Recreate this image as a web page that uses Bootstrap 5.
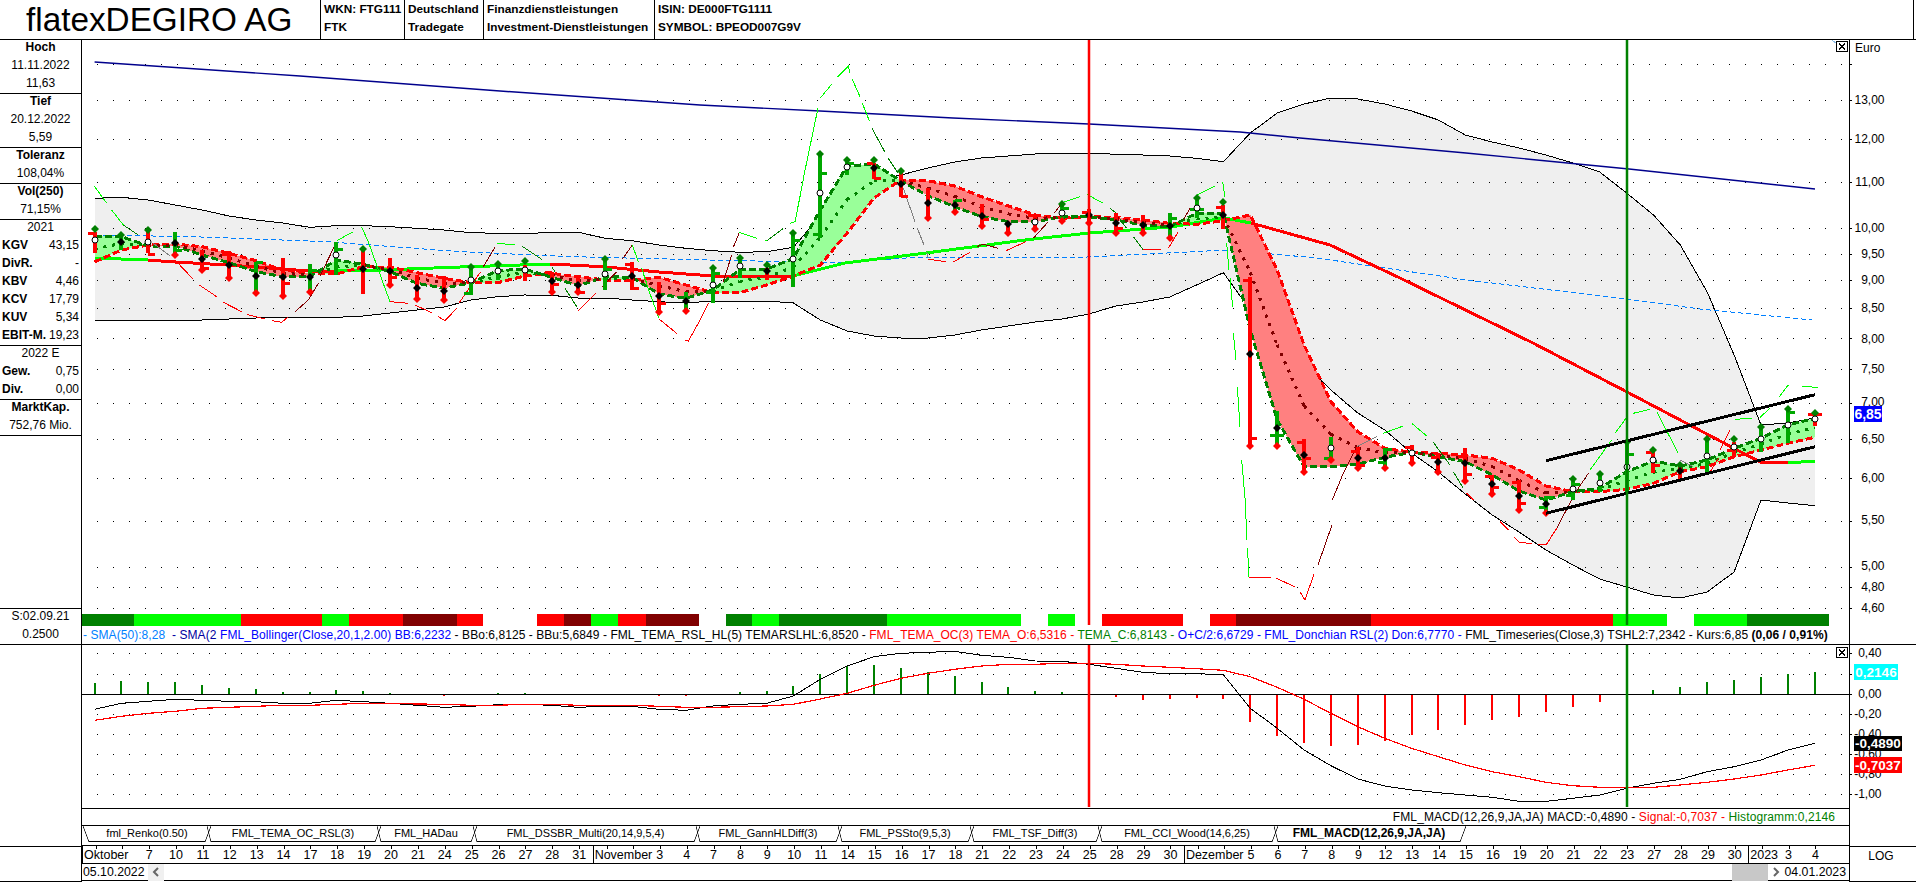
<!DOCTYPE html>
<html lang="de">
<head>
<meta charset="utf-8">
<title>flatexDEGIRO AG</title>
<link rel="stylesheet" href="https://cdn.jsdelivr.net/npm/bootstrap@5.3.0/dist/css/bootstrap.min.css">
<style>
html,body{margin:0;height:882px;overflow:hidden;background:#fff;color:#000;font-family:"Liberation Sans",Arial,sans-serif;font-size:12px;line-height:18px}
.line-b{border-bottom:1px solid #000}
.line-t{border-top:1px solid #000}
.line-s{border-left:1px solid #000}
.line-e{border-right:1px solid #000}
.head-bar{height:40px}
.head-title{width:320px;font-size:33.3px;line-height:40px;padding-left:26px;white-space:nowrap}
.head-cell{padding-left:3px;font-size:11.8px;font-weight:700;white-space:nowrap;overflow:hidden}
.hw-1{width:84px}.hw-2{width:79px}.hw-3{width:171px}.hw-4{width:148px}
.head-end{width:3px}
.side-col{width:82px;flex:none;height:842px}
.sc-1,.sc-3,.sc-7{display:flow-root}
.sc-1{height:36px}.sc-3{height:54px}.sc-7{height:126px}.sc-gap{height:173px}.sc-low{height:202px}.sc-foot{height:35px}
.sc-1>div:first-child,.sc-3>div:first-child,.sc-7>div:first-child{margin-top:-2px}
.kv{padding:0 2px}
.kv b{font-weight:700}
.mid-col{width:1767px;flex:none}
.axis-col{width:67px;flex:none}
svg{display:block}
.chart-main{width:1767px;height:586px}
.chart-low{width:1767px;height:163px}
.ax-main{width:66px;height:604px}
.ax-low{width:66px;height:201px}
.ax-sec-1{height:605px}.ax-sec-2{height:202px}.ax-sec-3{height:35px}
.legend-row{height:19px;padding-left:1px;white-space:nowrap;overflow:hidden;font-size:12px;letter-spacing:.06px}
.sma-cut{display:inline-block;width:42px;margin-right:6px;vertical-align:top}
.c-sky{color:#0080ff}.c-navy{color:#0000a0}.c-blue{color:#0000ff}.c-red{color:#f00}.c-grn{color:#008000}
.macd-row{height:17px;line-height:17px;padding-right:14px;white-space:nowrap;letter-spacing:.1px}
.tab-row{height:20px;display:grid;grid-template-columns:116px 164px 90px 217px 136px 126px 122px 170px 182px;column-gap:6px;padding-left:7px;white-space:nowrap}
.tab-item{position:relative;height:16px;line-height:15px;border-bottom:1px solid #000;text-align:center;font-size:11px}
.tab-item::before,.tab-item::after{content:"";position:absolute;top:0;bottom:-1px}
.tab-item::before{left:-4px;width:4px;background:linear-gradient(to bottom left,transparent calc(50% - .7px),#000 50%,transparent calc(50% + .7px))}
.tab-item::after{right:-6px;width:6px;background:linear-gradient(to bottom right,transparent calc(50% - .7px),#000 50%,transparent calc(50% + .7px))}
.tab-item:first-child::before{left:-6px;width:6px}
.tab-active{font-weight:700;font-size:12px}
.date-row{height:18px;display:grid;grid-template-columns:repeat(65,26.877px);white-space:nowrap;font-size:12.5px}
.date-cell{position:relative;text-align:center;line-height:18px}
.date-cell::before{content:"";position:absolute;left:50%;top:0;height:3px;width:1px;background:#000}
.date-cell.month{text-align:left;padding-left:1px;border-left:1px solid #000}
.date-cell.month::before{left:13px}
.scroll-row{height:18px;font-size:12.3px;padding-left:1px;white-space:nowrap}
.scroll-btn{width:16px;height:17px;background:#f0f0f0}
.scroll-btn.plain{background:transparent}
.scroll-thumb{width:36px;height:17px;background:#c8c8c8}
.log-cell{text-align:center;font-size:12px;line-height:18px;padding-right:4px}
</style>
</head>
<body>
<header class="head-bar d-flex line-b">
  <div class="head-title">flatexDEGIRO AG</div>
  <div class="head-cell line-s hw-1"><div>WKN: FTG111</div><div>FTK</div></div>
  <div class="head-cell line-s hw-2"><div>Deutschland</div><div>Tradegate</div></div>
  <div class="head-cell line-s hw-3"><div>Finanzdienstleistungen</div><div>Investment-Dienstleistungen</div></div>
  <div class="head-cell line-s hw-4"><div>ISIN: DE000FTG1111</div><div>SYMBOL: BPEOD007G9V</div></div>
  <div class="line-s ms-auto head-end"></div>
</header>
<main class="d-flex">
  <aside class="side-col line-e text-center">
    <div class="sc-3 line-b"><div class="fw-bold">Hoch</div><div>11.11.2022</div><div>11,63</div></div>
    <div class="sc-3 line-b"><div class="fw-bold">Tief</div><div>20.12.2022</div><div>5,59</div></div>
    <div class="sc-1 line-b"><div class="fw-bold">Toleranz</div><div>108,04%</div></div>
    <div class="sc-1 line-b"><div class="fw-bold">Vol(250)</div><div>71,15%</div></div>
    <div class="sc-7 line-b">
      <div>2021</div>
      <div class="d-flex justify-content-between kv"><b>KGV</b><span>43,15</span></div>
      <div class="d-flex justify-content-between kv"><b>DivR.</b><span>-</span></div>
      <div class="d-flex justify-content-between kv"><b>KBV</b><span>4,46</span></div>
      <div class="d-flex justify-content-between kv"><b>KCV</b><span>17,79</span></div>
      <div class="d-flex justify-content-between kv"><b>KUV</b><span>5,34</span></div>
      <div class="d-flex justify-content-between kv"><b>EBIT-M.</b><span>19,23</span></div>
    </div>
    <div class="sc-3 line-b">
      <div>2022 E</div>
      <div class="d-flex justify-content-between kv"><b>Gew.</b><span>0,75</span></div>
      <div class="d-flex justify-content-between kv"><b>Div.</b><span>0,00</span></div>
    </div>
    <div class="sc-1 line-b"><div class="fw-bold">MarktKap.</div><div>752,76 Mio.</div></div>
    <div class="sc-gap line-b"></div>
    <div class="sc-1 line-b"><div>S:02.09.21</div><div>0.2500</div></div>
    <div class="sc-low line-b"></div>
    <div class="sc-foot line-b"></div>
  </aside>
  <section class="mid-col d-flex flex-column">
    <svg class="chart-main" id="mainChart" viewBox="82 40 1767 586" xmlns="http://www.w3.org/2000/svg" shape-rendering="crispEdges"></svg>
    <div class="legend-row line-b"><span class="c-sky">- SMA(50):8,28</span>&nbsp; <span class="c-navy sma-cut">- SMA(2</span><span class="c-blue">FML_Bollinger(Close,20,1,2.00) BB:6,2232</span> - BBo:6,8125 - BBu:5,6849 - FML_TEMA_RSL_HL(5) TEMARSLHL:6,8520 - <span class="c-red">FML_TEMA_OC(3) TEMA_O:6,5316 -</span> <span class="c-grn">TEMA_C:6,8143 -</span> <span class="c-blue">O+C/2:6,6729 - FML_Donchian RSL(2) Don:6,7770 -</span> FML_Timeseries(Close,3) TSHL2:7,2342 - Kurs:6,85 <b>(0,06 / 0,91%)</b></div>
    <svg class="chart-low" id="lowChart" viewBox="82 645 1767 163" xmlns="http://www.w3.org/2000/svg" shape-rendering="crispEdges"></svg>
    <div class="line-t macd-row text-end">FML_MACD(12,26,9,JA,JA) MACD:-0,4890 - <span class="c-red">Signal:-0,7037 -</span> <span class="c-grn">Histogramm:0,2146</span></div>
    <nav class="tab-row line-t">
      <div class="tab-item">fml_Renko(0.50)</div>
      <div class="tab-item">FML_TEMA_OC_RSL(3)</div>
      <div class="tab-item">FML_HADau</div>
      <div class="tab-item">FML_DSSBR_Multi(20,14,9,5,4)</div>
      <div class="tab-item">FML_GannHLDiff(3)</div>
      <div class="tab-item">FML_PSSto(9,5,3)</div>
      <div class="tab-item">FML_TSF_Diff(3)</div>
      <div class="tab-item">FML_CCI_Wood(14,6,25)</div>
      <div class="tab-item tab-active">FML_MACD(12,26,9,JA,JA)</div>
    </nav>
    <div class="date-row line-t" id="dateRow"></div>
    <div class="scroll-row line-t line-b d-flex align-items-center">
      <span>05.10.2022</span>
      <div class="scroll-btn ms-1 d-flex align-items-center justify-content-center"><svg width="8" height="10" viewBox="0 0 8 10"><path d="M6 1 2 5l4 4" fill="none" stroke="#666" stroke-width="2"/></svg></div>
      <div class="flex-grow-1"></div>
      <div class="scroll-thumb"></div>
      <div class="scroll-btn plain d-flex align-items-center justify-content-center"><svg width="8" height="10" viewBox="0 0 8 10"><path d="m2 1 4 4-4 4" fill="none" stroke="#666" stroke-width="2"/></svg></div>
      <span class="pe-1">04.01.2023</span>
    </div>
  </section>
  <aside class="axis-col line-s d-flex flex-column">
    <div class="ax-sec-1 line-b"><svg class="ax-main" id="axMain" viewBox="1850 40 66 604" xmlns="http://www.w3.org/2000/svg"></svg></div>
    <div class="ax-sec-2 line-b"><svg class="ax-low" id="axLow" viewBox="1850 645 66 201" xmlns="http://www.w3.org/2000/svg"></svg></div>
    <div class="ax-sec-3 line-b log-cell">LOG</div>
  </aside>
</main>
<script src="https://cdn.jsdelivr.net/npm/bootstrap@5.3.0/dist/js/bootstrap.bundle.min.js"></script>
<script>
const X=i=>94.6+26.877*i;
const O=[262,250,245,244,246.7,253.3,260.7,270,273.3,274,266.7,267.3,272.7,278.3,282.7,282.7,276,273.3,276.7,280,280,277.3,285,292.7,292.7,285,276,265,233,198,180,180.7,186,196.7,206,215,218.3,216.7,217.3,220,223.3,224.3,220.7,215,270,345,401.7,431.7,448.3,452.3,453.3,455,458.3,470,486,491.7,491.7,489.3,483.3,471.7,466.7,456.7,450,443.3,437.3];
const C=[236,236.7,246,246,255,262.7,271.7,276.7,276.7,260,264.3,271.7,283.3,288.3,282.7,270.7,269,277.3,285.7,276.7,277.3,294,298.3,290,270,269.3,258.3,210,166,164,181,195.7,206.7,216.7,221.7,221.7,216.7,216.7,220,225,226.7,213.3,213.3,330,420,466.7,466.7,464,457.3,452.3,456.7,461.7,475,491,500,491.7,488.3,471.7,461,466,460,448.3,438.3,425,418.3];
const BO=[198.3,197.3,200,205,210,216,220,223,227.3,225.7,225.7,226.7,228.3,230,232.7,233.3,233.3,232.7,232.3,238.3,240.7,245,248.3,250.7,252.3,251.7,247.3,216,193,180.7,175,168,162,158,156,154,153,153,154.3,155,156,158.3,161.7,133,113,104,98,99,104,111,120,135,142,148,155,163,172,193,215,245,292,355,425,423,418];
const BU=[320.7,320.7,320.7,320.7,320,319,318,317.7,317.3,317.3,316,313,310,307,300,296.7,295,295.3,298,298,300,301.7,303,301,301,301,303,320,331,336,338,338,335,330,326,322,319,314,306,302,297,285,272.7,310,340,364,390,413,430,453,472,494,515,532,550,565,579,587,595,598,592,572,500,503,505.7];
const BARS=[['r',232,253,240,'w',229,0,233,0],['g',235,250,242,'b',235,0,0,0],['r',232,253,242,'w',230,0,0,254],['g',232,255,243,'b',0,255,0,250],['r',250,270,259,'b',0,270,0,268],['r',251,278,265,'b',0,278,254,0],['g',262,293,276,'b',0,293,0,262],['r',258,296,277,'b',0,296,0,283],['g',264,292,277,'b',0,292,0,270],['g',242,275,255,'w',0,0,0,249],['r',250,294,269,'b',249,0,0,0],['r',258,285,271,'b',0,285,0,277],['r',275,300,288,'b',0,299,0,0],['r',276,300,291,'b',0,300,0,0],['g',267,295,280,'w',267,0,293,0],['g',264,280,271,'w',264,0,0,0],['r',265,281,270,'w',261,0,0,0],['r',272,293,281,'b',0,292,272,284],['r',277,293,285,'b',0,292,0,292],['g',260,290,274,'w',259,0,0,269],['r',262,290,276,'b',0,0,264,288],['r',282,313,296,'b',0,312,0,303],['g',292,311,301,'b',0,311,0,0],['g',268,303,285,'w',268,0,292,273],['g',258,278,266,'w',258,0,0,0],['r',268,280,271,'b',265,0,0,276],['g',233,287,259,'w',233,0,0,240],['g',154,238,193,'w',154,0,234,173],['g',160,175,167,'w',160,0,0,163],['r',163,179,168,'b',160,0,163,178],['r',171,197,184,'b',171,0,0,196],['r',188,220,203,'b',0,218,0,0],['g',200,212,205,'b',0,212,0,200],['r',204,228,216,'b',0,226,0,219],['r',222,232,224,'b',0,233,0,0],['r',215,229,222,'w',0,229,215,0],['g',204,221,213,'w',204,221,0,208],['r',209,222,215,'b',0,223,212,0],['r',213,233,223,'b',0,233,0,228],['r',215,233,225,'b',0,233,0,0],['g',213,238,226,'b',0,238,0,218],['g',198,218,208,'w',198,0,209,209],['r',205,229,215,'b',202,0,207,0],['r',277,446,354,'b',0,446,280,438],['g',411,446,428,'b',0,446,435,435],['r',439,472,455,'b',0,472,442,458],['g',437,460,448,'w',0,460,458,0],['r',447,468,458,'b',0,468,451,465],['g',448,468,458,'b',0,468,462,449],['r',445,463,453,'w',0,463,447,0],['r',453,473,462,'b',0,472,457,0],['r',448,481,463,'b',0,481,456,474],['r',475,494,484,'b',0,494,476,487],['r',480,510,496,'b',0,510,482,503],['g',496,513,504,'b',0,513,507,497],['g',479,500,489,'w',479,0,495,484],['g',474,492,483,'w',474,0,0,0],['g',442,492,467,'w',442,0,0,454],['r',452,473,460,'w',450,0,452,465],['r',467,480,471,'b',465,0,0,0],['g',439,475,456,'w',439,0,0,0],['r',442,457,447,'w',439,0,450,0],['g',427,452,439,'w',427,0,0,0],['g',409,443,425,'w',409,0,0,412],['r',415,426,419,'w',413,0,414,414]];
const STRIP=[[82,134,'#008000'],[134,241,'#0f0'],[241,322,'#f00'],[322,349,'#0f0'],[349,403,'#f00'],[403,457,'#800000'],[457,483,'#f00'],[537,564,'#f00'],[564,591,'#800000'],[591,618,'#0f0'],[618,645.5,'#f00'],[645.5,699,'#800000'],[726,752,'#008000'],[752,779,'#0f0'],[779,887,'#008000'],[887,1021,'#0f0'],[1048,1075,'#0f0'],[1102,1183,'#f00'],[1210,1236,'#f00'],[1236,1371,'#800000'],[1371,1613,'#f00'],[1613,1667,'#0f0'],[1694,1747,'#0f0'],[1747,1829,'#008000']];
const G='#0f0',D='#008000',R='#f00',K='#800000',Y='#808080';
function thin(ox,oy,list){return list.map(([c,a])=>[c,a.map((v,i)=>i%2?oy+v/3:ox+v/3)]);}
const THIN=[].concat(
 thin(60,170,[[G,[103,48,140,100]],[G,[155,120,190,165]],[D,[190,165,235,195]],[Y,[280,220,330,258]],[R,[345,270,400,328]],[R,[418,345,470,380]],[R,[490,397,545,425]],[R,[560,433,615,447]],[R,[635,452,665,457,685,440]],[K,[705,425,745,390,775,340]],[K,[780,318,830,215]],[G,[830,212,880,185]],[G,[905,172,925,215,975,355,990,395]],[R,[990,395,1045,400]],[R,[1065,405,1115,428]],[R,[1135,440,1155,452,1190,415]]]),
 thin(440,170,[[R,[58,398,122,305]],[K,[130,290,165,232]],[G,[172,220,225,225]],[D,[245,228,305,268]],[D,[335,290,345,305]],[D,[375,355,410,410]],[R,[415,422,467,370]],[K,[487,350,530,305]],[K,[547,268,577,225]],[G,[577,225,595,275]],[G,[605,295,628,365,657,445]],[R,[657,447,710,490]],[R,[735,510,745,513,775,460,805,400]],[K,[850,335,875,255]],[K,[880,232,897,190]],[G,[897,187,950,205]],[G,[975,212,980,213]],[D,[980,213,1030,175]],[G,[1050,160,1065,155,1090,30]]]),
 [[G,[803,180,818,108]]],
 thin(820,50,[[G,[0,145,35,103]],[G,[52,82,85,48,90,68]],[G,[97,88,120,140]],[G,[127,160,148,212]],[D,[155,233,195,307]],[D,[205,325,235,370]],[Y,[250,415,285,515]],[Y,[292,535,312,585]],[Y,[320,605,325,625]],[R,[325,628,378,635]],[R,[398,637,450,607]],[K,[470,590,490,583,535,595]],[R,[558,602,617,575]],[K,[640,565,685,515]],[K,[703,490,725,460]],[G,[725,458,780,440]],[G,[800,433,850,460]],[D,[870,475,890,490]],[D,[905,515,920,535]],[D,[940,560,970,600]],[R,[970,600,1023,597]],[R,[1045,595,1075,545]],[K,[1090,510,1110,475]],[G,[1130,435,1185,408]],[G,[1208,397,1215,440]]]),
 thin(1200,200,[[G,[80,130,87,210]],[G,[90,235,98,320]],[G,[100,400,108,480]],[G,[112,560,120,680]],[G,[125,780,135,895]],[K,[397,900,430,820,470,740]],[Y,[470,740,530,710]],[G,[550,700,610,678]],[G,[635,670,680,708]],[D,[700,727,750,795]],[D,[760,815,790,865]],[R,[800,880,820,900]]]),
 [[G,[1245,498,1247,540]],[G,[1247.5,548,1249,577]],[R,[1249,577,1271,577]],[R,[1276,578,1295,587]],[R,[1300,592,1305,600,1314,574]],[K,[1318,565,1332,525]]],
 thin(1500,360,[[R,[0,485,25,510]],[R,[43,532,60,548,95,550]],[R,[115,552,140,552,170,505]],[K,[170,505,225,400]],[K,[225,400,265,340]],[G,[270,330,335,240]],[G,[345,220,378,175]],[G,[400,160,450,148]],[G,[470,155,535,280]],[Y,[540,300,580,320]],[R,[625,345,655,295]],[R,[660,270,690,210]],[G,[705,178,755,175]],[G,[780,172,810,145]],[G,[838,110,865,75]],[G,[905,78,955,83]]])
);
const HIST=[683.3,681,682.3,682.3,685.3,688.3,689.3,692,692,690.3,691,693,694,696,694,693,693,694,694,694,694,696,696,694,692,691,686,674.3,666,665,668.3,672.3,676,682,687,691,692,694,696.7,699.7,698.7,697.7,698.7,721.7,735.7,743.3,745.7,744.7,740.7,734.7,729.7,724.7,719.7,716.7,711.7,706.7,701.7,694,690.3,687,682.3,680,677.3,674.3,672.3];
const MACD=[709.3,703.3,701.3,699.3,700.3,701.3,701.7,703.3,703.3,700.3,701.7,703.3,705.3,707.3,706.3,704.7,704.3,705.3,707.3,706.3,706.3,709.3,710.3,706,704.3,703.3,696,679.3,666,656.7,653.3,652.3,651.3,655.3,657.3,661,661.3,664.3,668.3,672.3,673.7,673.7,674.7,708.3,728.3,750,765.7,779,786,790,792.7,795,797.3,801.3,801.3,798.3,795,788.3,783.3,779.3,771.7,766.7,760,750,743.3];
const SIG=[720.3,716.3,713.3,711.3,708.3,707.3,706.3,705.3,705.3,704.3,703.3,703.3,704,704.3,705.3,705.3,704.3,704.3,705.3,705.3,705.3,706.3,707.3,707.3,706.7,706,704.3,699,693.3,685.3,678.3,673.3,669.3,666,664.3,664.3,663.3,663.3,664.3,666,667.3,668.7,670.3,676.7,687.3,699.3,713.3,726.7,738.3,748.3,756.7,765,771.7,776.7,782.3,785.7,787.3,787.3,787.3,785,782.3,779,775,770,765.3];

function pl(pts,c,w,extra){return `<polyline points="${pts.join(' ')}" fill="none" stroke="${c}" stroke-width="${w}" ${extra||''}/>`;}
const series=a=>a.map((y,i)=>[+X(i).toFixed(1),y]);
function dots(rows,xEnd){let s='';rows.forEach(y=>{for(let x=97;x<xEnd;x+=16)s+=`<rect x="${x}" y="${y}" width="1" height="1" fill="#000"/>`;});return s;}
function closeBox(x,y){return `<rect x="${x+.5}" y="${y+.5}" width="11" height="10" fill="#fff" stroke="#000"/><path d="M${x+3} ${y+3}l6 5M${x+9} ${y+3}l-6 5" stroke="#000" stroke-width="1.5" fill="none"/>`;}
function diamond(x,y,r,c){return `<polygon points="${x},${y-r} ${x+r},${y} ${x},${y+r} ${x-r},${y}" fill="${c}" shape-rendering="auto"/>`;}

function drawMain(){
 let s='';
 s+=`<polygon points="${series(BO).concat(series(BU).reverse()).join(' ')}" fill="#efefef"/>`;
 s+=dots([64,100,139,182,228,254,280,308,338,369,403,439,478,521,567,587,608],1845);
 s+=pl(series(BO),'#000',1)+pl(series(BU),'#000',1);
 s+=pl([[94.6,62],[300,76],[500,91],[700,105],[820,111],[953,118],[1089,124],[1240,132],[1300,138],[1466,153],[1629,169],[1815,189]],'#00008c',1.4,'shape-rendering="auto"');
 s+=pl([[94.6,235],[193,236.7],[327,241.7],[460,251.7],[573,256.7],[707,260],[840,262.7],[920,257],[1087,257],[1227,250],[1317,258],[1467,280],[1627,299],[1700,309],[1812,320]],'#0080ff',1,'stroke-dasharray="5 3"');
 const gf='#99ff99',rf='#ff8080';
 let mid='';
 for(let i=0;i<64;i++){
  const x0=X(i),x1=X(i+1),d0=O[i]-C[i],d1=O[i+1]-C[i+1];
  const poly=(a,c)=>`<polygon points="${a.join(' ')}" fill="${c}"/>`;
  if(d0*d1>=0){
   s+=poly([[x0,O[i]],[x1,O[i+1]],[x1,C[i+1]],[x0,C[i]]],(d0+d1)>=0?gf:rf);
  }else{
   const t=d0/(d0-d1),xm=x0+(x1-x0)*t,ym=O[i]+(O[i+1]-O[i])*t;
   s+=poly([[x0,O[i]],[xm,ym],[x0,C[i]]],d0>0?gf:rf);
   s+=poly([[xm,ym],[x1,O[i+1]],[x1,C[i+1]]],d1>0?gf:rf);
  }
  const c=(d0+d1)>=0?'#008000':'#800000';
  mid+=`<line x1="${x0}" y1="${(O[i]+C[i])/2}" x2="${x1}" y2="${(O[i+1]+C[i+1])/2}" stroke="${c}" stroke-width="3" stroke-dasharray="3 6"/>`;
 }
 [[G,[[94.6,258],[147.7,260]]],[R,[[147.7,260],[175,262],[228,265],[282,269],[309,271],[336,271]]],[G,[[336,271],[363,270.7],[460,267],[550,264]]],[R,[[550,264],[603,266.7],[659,272],[713,276],[767,276.7],[793,276]]],[G,[[793,276],[845,263],[926,253],[1025,240],[1089,233],[1171,227],[1224,218],[1251,223]]],[R,[[1251,223],[1330,245],[1400,278],[1533,343],[1627,392],[1760,462],[1788,463]]],[G,[[1788,463],[1815,461]]]].forEach(([c,p])=>{s+=pl(p,c,3);});
 s+=pl(series(O),'#f00',3,'stroke-dasharray="7 3"');
 s+=pl(series(C),'#008000',3,'stroke-dasharray="7 3"');
 s+=mid;
 THIN.forEach(([c,a])=>{s+=`<polyline points="${a.map(v=>v.toFixed(1)).join(' ')}" fill="none" stroke="${c}" stroke-width="1"/>`;});
 BARS.forEach((b,i)=>{
  const [k,top,bot,my,mt,td,bd,lt,rt]=b,x=Math.round(X(i)),col=k==='g'?'#00a800':'#f00';
  s+=`<rect x="${x-2}" y="${top}" width="4" height="${bot-top}" fill="${col}"/>`;
  if(lt)s+=`<rect x="${x-7}" y="${lt-1}" width="7" height="3" fill="${col}"/>`;
  if(rt)s+=`<rect x="${x}" y="${rt-1}" width="7" height="3" fill="${col}"/>`;
  if(td)s+=diamond(x,td,4,'#008000');
  if(bd)s+=diamond(x,bd,4,'#f00');
  if(mt==='b')s+=diamond(x,my,4,'#000');
  else s+=`<circle cx="${x}" cy="${my}" r="3" fill="#fff" stroke="#000" stroke-width="1" shape-rendering="auto"/>`;
 });
 s+=pl([[1546,460.7],[1815,394.7]],'#000',3)+pl([[1546,513.3],[1815,446.7]],'#000',3);
 STRIP.forEach(([a,b,c])=>{s+=`<rect x="${a}" y="614" width="${b-a}" height="12" fill="${c}"/>`;});
 s+=`<line x1="1089" y1="40" x2="1089" y2="625" stroke="#f00" stroke-width="2.5" shape-rendering="auto"/>`;
 s+=`<line x1="1627" y1="40" x2="1627" y2="625" stroke="#008000" stroke-width="2.5" shape-rendering="auto"/>`;
 s+=`<path d="M1832 40l5 4" stroke="#8fbfe8" stroke-width="1"/>`;
 s+=closeBox(1836,41);
 document.getElementById('mainChart').innerHTML=s;
}
function drawLow(){
 let s=dots([653,674,714,734,754,774,794],1845);
 HIST.forEach((y,i)=>{ if(y===694)return; const x=Math.round(X(i));
  s+=`<rect x="${x-1}" y="${Math.min(y,694)}" width="2" height="${Math.abs(y-694)}" fill="${y<694?'#008000':'#f00'}"/>`;});
 s+=`<line x1="82" y1="694.5" x2="1849" y2="694.5" stroke="#000"/>`;
 s+=pl(series(MACD),'#000',1)+pl(series(SIG),'#f00',1.2);
 s+=`<line x1="1089" y1="645" x2="1089" y2="807" stroke="#f00" stroke-width="2.5" shape-rendering="auto"/><line x1="1627" y1="645" x2="1627" y2="807" stroke="#008000" stroke-width="2.5" shape-rendering="auto"/>`;
 s+=closeBox(1836,647);
 document.getElementById('lowChart').innerHTML=s;
}
function axisText(x,y,t,anchor,fill,size,weight){return `<text x="${x}" y="${y}" text-anchor="${anchor||'end'}" font-family="Liberation Sans, Arial, sans-serif" font-size="${size||12}" font-weight="${weight||400}" fill="${fill||'#000'}">${t}</text>`;}
function tag(x,y,w,h,bg,t,size){return `<rect x="${x}" y="${y}" width="${w}" height="${h}" fill="${bg}"/>`+axisText(x+w/2,y+h-3,t,'middle','#fff',size||13.5,700);}
function drawAxis(){
 let s=axisText(1855,52,'Euro','start');
 [64,100,139,182,228,254,280,308,338,369,403,439,478,521,567,587,608].forEach(y=>{s+=`<rect x="1850" y="${y}" width="2" height="1" fill="#000"/>`;});
 [['13,00',99],['12,00',138],['11,00',181],['10,00',227],['9,50',253],['9,00',279],['8,50',307],['8,00',338],['7,50',368],['7,00',401],['6,50',438],['6,00',477],['5,50',519],['5,00',565],['4,80',586],['4,60',607]].forEach(([t,y])=>{s+=axisText(1884.5,y+4.5,t);});
 s+=tag(1854,406,28,16,'#0000ff','6,85',14);
 document.getElementById('axMain').innerHTML=s;
 let q='';
 [653,674,694,714,734,754,774,794].forEach(y=>{q+=`<rect x="1850" y="${y}" width="2" height="1" fill="#000"/>`;});
 [['0,40',652],['0,00',693],['-0,20',713],['-0,40',733],['-0,60',753],['-0,80',773],['-1,00',793]].forEach(([t,y])=>{q+=axisText(1881.5,y+4.5,t);});
 q+=tag(1854,664,44,16,'#00ffff','0,2146');
 q+=tag(1854,736,48,15,'#000','-0,4890');
 q+=tag(1854,757,48,16,'#f00','-0,7037');
 document.getElementById('axLow').innerHTML=q;
}
function drawDates(){
 const L={0:'Oktober',2:'7',3:'10',4:'11',5:'12',6:'13',7:'14',8:'17',9:'18',10:'19',11:'20',12:'21',13:'24',14:'25',15:'26',16:'27',17:'28',18:'31',19:'November',21:'3',22:'4',23:'7',24:'8',25:'9',26:'10',27:'11',28:'14',29:'15',30:'16',31:'17',32:'18',33:'21',34:'22',35:'23',36:'24',37:'25',38:'28',39:'29',40:'30',41:'Dezember',43:'5',44:'6',45:'7',46:'8',47:'9',48:'12',49:'13',50:'14',51:'15',52:'16',53:'19',54:'20',55:'21',56:'22',57:'23',58:'27',59:'28',60:'29',61:'30',62:'2023',63:'3',64:'4'};
 let h='';
 for(let i=0;i<65;i++){
  const m=(i===0||i===19||i===41||i===62);
  h+=`<div class="date-cell${m?' month':''}">${L[i]||''}</div>`;
 }
 document.getElementById('dateRow').innerHTML=h;
}
drawMain();drawLow();drawAxis();drawDates();
</script>
</body>
</html>
